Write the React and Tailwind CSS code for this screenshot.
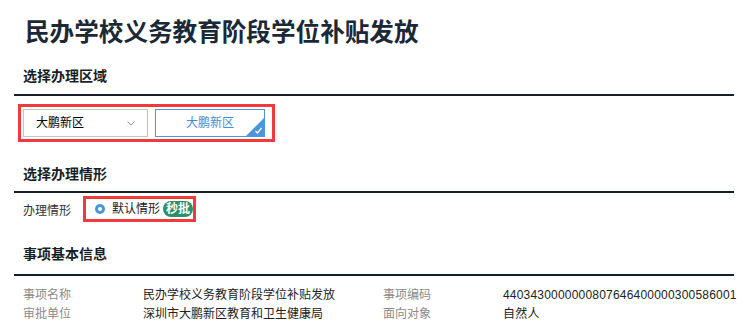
import React from 'react'

const font = { fontFamily: '"Liberation Sans", "Noto Sans CJK SC", sans-serif' }

function SectionTitle({ children, pb }) {
    return (
        <div className={'border-b-2 border-[#15202b] pl-[9px] ' + pb}>
            <h2 className="text-[14px] leading-[20px] font-bold text-[#1a1f26]">{children}</h2>
        </div>
    )
}

function InfoRow({ label1, value1, label2, value2 }) {
    return (
        <div className="grid grid-cols-[120px_240px_120px_1fr] text-[12px] leading-[19px] whitespace-nowrap">
            <span className="text-[#8a8a8a]">{label1}</span>
            <span className="text-[#222]">{value1}</span>
            <span className="text-[#8a8a8a]">{label2}</span>
            <span className="text-[#222] tracking-[0.2px]">{value2}</span>
        </div>
    )
}

export default function App() {
    return (
        <div className="bg-white w-[749px] h-[331px] overflow-hidden pl-[14px] pr-[15px]" style={font}>
            <h1 className="pt-[18px] pl-[11px] text-[24.6px] leading-[30px] font-bold text-[#1b2936]">
                民办学校义务教育阶段学位补贴发放
            </h1>

            <div className="mt-[18px]">
                <SectionTitle pb="pb-2">选择办理区域</SectionTitle>
                <div className="mt-2 ml-[4px] flex">
                    <div className="flex items-center border-[3px] border-[#f23a3c] pl-[2px] pr-[7px] py-[2px] gap-[7px]">
                        <div className="w-[125px] h-[28px] border border-[#c4c4c4] flex items-center justify-between pl-[12px] pr-[12px]">
                            <span className="text-[12px] text-black">大鹏新区</span>
                            <svg width="8" height="5" viewBox="0 0 8 5" fill="none">
                                <path d="M0.5 0.5 L4 4 L7.5 0.5" stroke="#9a9a9a" strokeWidth="1" />
                            </svg>
                        </div>
                        <div className="relative w-[110px] h-[28px] border border-[#4a96dd] flex items-center justify-center">
                            <span className="text-[12px] text-[#3f8fd8]">大鹏新区</span>
                            <svg className="absolute right-0 bottom-0" width="18" height="18" viewBox="0 0 18 18">
                                <path d="M18 0 L18 18 L0 18 Z" fill="#4a96dd" />
                                <path d="M9.5 13 L11.5 15 L15.5 10" stroke="#fff" strokeWidth="1.3" fill="none" />
                            </svg>
                        </div>
                    </div>
                </div>
            </div>

            <div className="mt-[22px]">
                <SectionTitle pb="pb-[7px]">选择办理情形</SectionTitle>
                <div className="mt-[3px] pl-[9px] flex items-center">
                    <span className="w-[60px] text-[12px] text-[#333] pt-[3px]">办理情形</span>
                    <div className="flex items-center h-[26px] border-[3px] border-[#f23a3c] pl-[9px]">
                        <span className="w-[10px] h-[10px] rounded-full bg-[#4a96dd] flex items-center justify-center">
                            <span className="w-[4px] h-[4px] rounded-full bg-white" />
                        </span>
                        <span className="ml-[7px] text-[12px] text-[#222]">默认情形</span>
                        <span className="ml-[3px] h-[16px] px-[3px] rounded-full bg-[#2e8e67] text-white text-[12px] leading-[16px] font-bold">秒批</span>
                    </div>
                </div>
            </div>

            <div className="mt-[22px]">
                <SectionTitle pb="pb-[10px]">事项基本信息</SectionTitle>
                <div className="mt-[10px] pl-[9px]">
                    <InfoRow label1="事项名称" value1="民办学校义务教育阶段学位补贴发放" label2="事项编码" value2="4403430000000807646400000300586001" />
                    <InfoRow label1="审批单位" value1="深圳市大鹏新区教育和卫生健康局" label2="面向对象" value2="自然人" />
                </div>
            </div>
        </div>
    )
}
